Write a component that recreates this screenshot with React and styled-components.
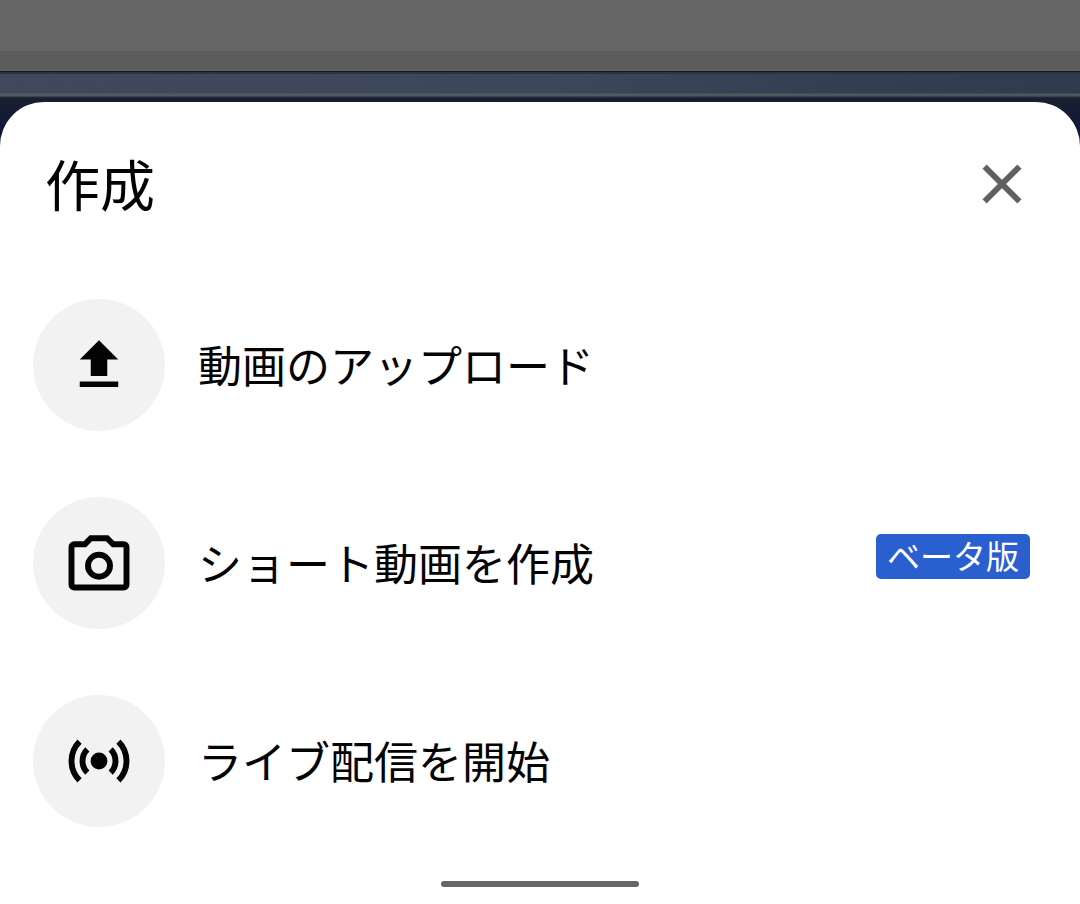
import React from 'react';
import styled, { createGlobalStyle } from 'styled-components';

const GlobalStyle = createGlobalStyle`
    * {
        box-sizing: border-box;
    }
    body {
        margin: 0;
        background: #fff;
        color: #030303;
        font-family: "Noto Sans CJK JP", "Noto Sans", sans-serif;
    }
`;

const Page = styled.div`
    display: flex;
    flex-direction: column;
    min-height: 100vh;
`;

const StatusStrip = styled.div`
    height: 51px;
    background: #666;
`;

const ToolbarStrip = styled.div`
    height: 20px;
    background: #5c5c5c;
`;

const VideoStrip = styled.div`
    height: 27px;
    background:
        linear-gradient(180deg, #15191e 0 1px, #2c333b 1px 3px, transparent 3px 22px, rgba(90, 98, 100, 0.7) 23px 25px, #222b3a 26px),
        linear-gradient(90deg, #40495b, #3c4759 50%, #333e53 80%, #303b50);
`;

const Stage = styled.div`
    display: flex;
    flex: 1;
    padding-top: 4px;
    background: linear-gradient(180deg, #18202f 0, #10183a 32px, #0c1233 60px);
`;

const Sheet = styled.main`
    display: flex;
    flex-direction: column;
    flex: 1;
    border-radius: 44px 44px 0 0;
    background: #fff;
`;

const Header = styled.header`
    display: flex;
    align-items: center;
    justify-content: space-between;
    height: 164px;
    padding: 0 45px;
`;

const Title = styled.h1`
    margin: 0;
    padding-bottom: 4px;
    font-size: 55px;
    line-height: 80px;
    font-weight: 400;
`;

const CloseButton = styled.button`
    display: flex;
    padding: 0;
    border: 0;
    background: none;
    color: #606060;
    cursor: pointer;
`;

const List = styled.ul`
    margin: 0;
    padding: 0;
    list-style: none;
`;

const Row = styled.button`
    display: flex;
    align-items: center;
    gap: 33px;
    width: 100%;
    padding: 33px 50px 33px 33px;
    border: 0;
    background: none;
    color: inherit;
    font: inherit;
    text-align: left;
    cursor: pointer;
`;

const IconCircle = styled.span`
    display: flex;
    align-items: center;
    justify-content: center;
    flex: none;
    width: 132px;
    height: 132px;
    border-radius: 50%;
    background: #f2f2f2;
`;

const Label = styled.span`
    flex: 1;
    padding-bottom: 2px;
    font-size: 44px;
    line-height: 64px;
`;

const Badge = styled.span`
    margin-bottom: 13px;
    padding: 0 11px 2px;
    border-radius: 5px;
    background: #295fcf;
    color: #fff;
    font-size: 33px;
    line-height: 43px;
`;

const Footer = styled.footer`
    display: flex;
    justify-content: center;
    margin-top: auto;
    padding: 17px 0;
`;

const HomeIndicator = styled.div`
    width: 198px;
    height: 6px;
    border-radius: 3px;
    background: #666;
`;

const Svg = styled.svg`
    display: block;
    width: 66px;
    height: 66px;
`;

const CloseIcon = () => (
    <Svg viewBox="0 0 24 24" fill="currentColor" stroke="currentColor" strokeWidth="0.15" aria-hidden="true">
        <path d="M19 6.41 17.59 5 12 10.59 6.41 5 5 6.41 10.59 12 5 17.59 6.41 19 12 13.41 17.59 19 19 17.59 13.41 12z" />
    </Svg>
);

const UploadIcon = () => (
    <Svg viewBox="0 0 24 24" fill="currentColor" aria-hidden="true">
        <path d="M9 16h6v-6h4l-7-7-7 7h4zM5 18h14v2H5z" />
    </Svg>
);

const CameraIcon = () => (
    <Svg viewBox="0 0 24 24" fill="none" stroke="currentColor" strokeWidth="2.15" aria-hidden="true">
        <path d="M9.05 3h5.9l2.2 2.2H21a1 1 0 0 1 1 1V19.9a1 1 0 0 1-1 1H3a1 1 0 0 1-1-1V6.2a1 1 0 0 1 1-1h3.85z" />
        <circle cx="12" cy="13" r="4" />
    </Svg>
);

const LiveIcon = () => (
    <Svg viewBox="0 0 24 24" fill="none" stroke="currentColor" strokeWidth="2.15" aria-hidden="true">
        <circle cx="12" cy="12" r="3.05" fill="currentColor" stroke="none" />
        <path d="M7.76 7.76a6 6 0 0 0 0 8.48M16.24 7.76a6 6 0 0 1 0 8.48" />
        <path d="M4.93 4.93a10 10 0 0 0 0 14.14M19.07 4.93a10 10 0 0 1 0 14.14" />
    </Svg>
);

const items = [
    { label: '動画のアップロード', Icon: UploadIcon },
    { label: 'ショート動画を作成', Icon: CameraIcon, badge: 'ベータ版' },
    { label: 'ライブ配信を開始', Icon: LiveIcon },
];

const App = () => (
    <Page lang="ja">
        <GlobalStyle />
        <StatusStrip />
        <ToolbarStrip />
        <VideoStrip />
        <Stage>
            <Sheet>
                <Header>
                    <Title>作成</Title>
                    <CloseButton type="button" aria-label="閉じる">
                        <CloseIcon />
                    </CloseButton>
                </Header>
                <List>
                    {items.map(({ label, Icon, badge }) => (
                        <li key={label}>
                            <Row type="button">
                                <IconCircle><Icon /></IconCircle>
                                <Label>{label}</Label>
                                {badge && <Badge>{badge}</Badge>}
                            </Row>
                        </li>
                    ))}
                </List>
                <Footer>
                    <HomeIndicator />
                </Footer>
            </Sheet>
        </Stage>
    </Page>
);

export default App;
